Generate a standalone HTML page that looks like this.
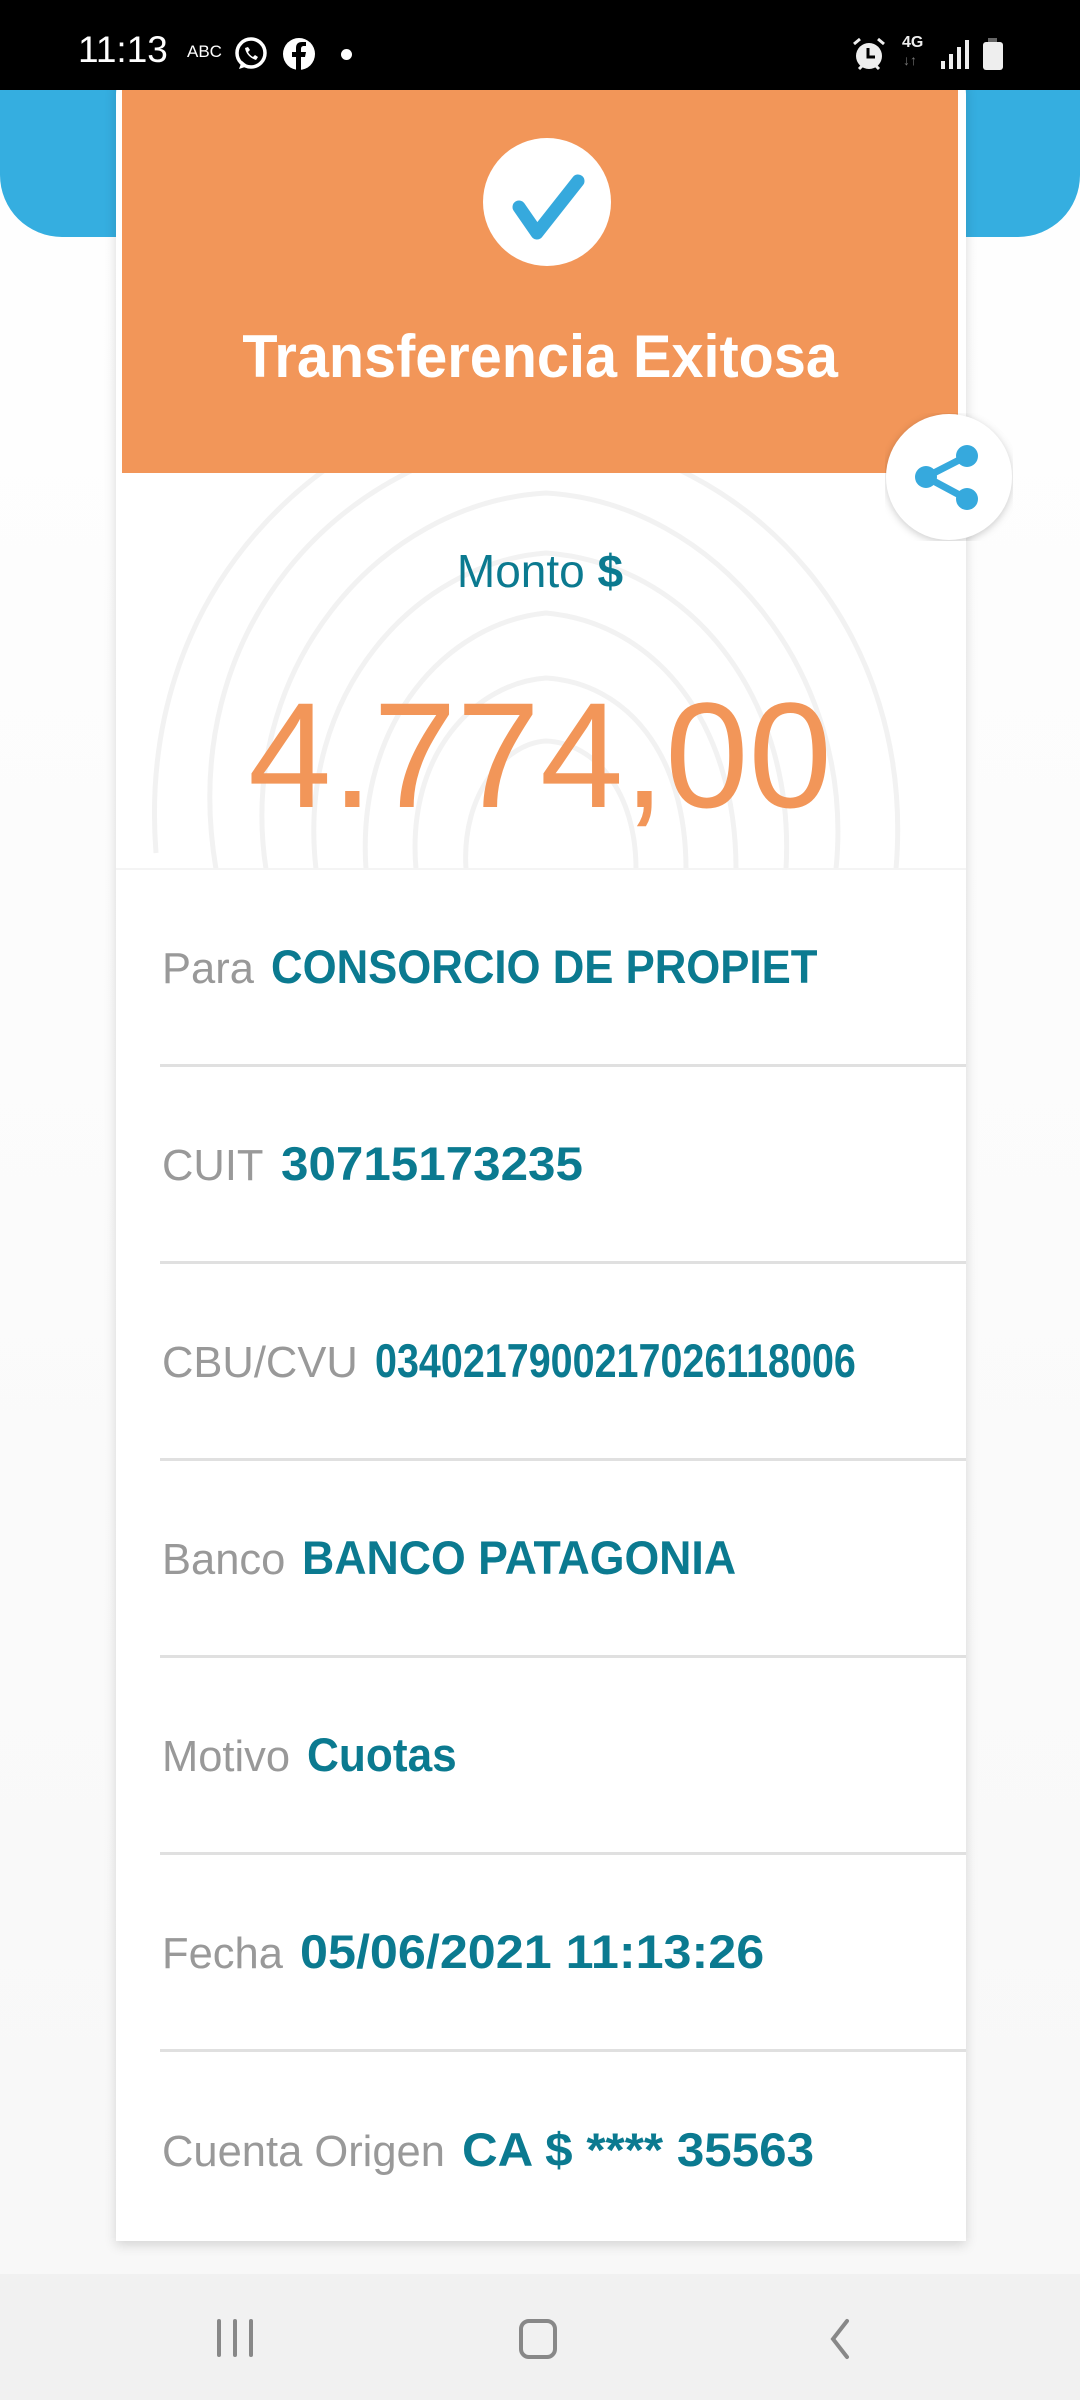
<!DOCTYPE html>
<html><head><meta charset="utf-8"><style>
*{margin:0;padding:0;box-sizing:border-box}
body{width:1080px;height:2400px;position:relative;overflow:hidden;background:linear-gradient(#ffffff 0,#f8f8f8 2200px);font-family:"Liberation Sans",sans-serif}
.abs{position:absolute}
.sb{left:0;top:0;width:1080px;height:90px;background:#000;color:#fff}
.blue{left:0;top:60px;width:1080px;height:177px;background:#35aee0;border-radius:0 0 62px 62px}
.card{left:116px;top:60px;width:850px;height:2181px;background:#fff;border-radius:34px 34px 0 0;box-shadow:0 4px 12px rgba(0,0,0,0.15)}
.orange{left:122px;top:60px;width:836px;height:413px;background:#f29659;border-radius:28px 28px 0 0}
.title{left:0;width:1080px;top:322px;text-align:center;color:#fff;font-weight:bold;font-size:60px;line-height:70px}
.title span{display:inline-block;transform:scaleX(0.96)}
.lbl{left:162px;font-size:43.5px;color:#999;line-height:50px;white-space:nowrap}
.lbl b{display:inline-block;color:#0b7a90;font-size:47px;transform-origin:left;margin-left:17px;vertical-align:baseline}
.div{left:160px;width:806px;height:3px;background:#e0e0e0}
.nav{left:0;top:2274px;width:1080px;height:126px;background:#f1f1f1}
</style></head><body>
<div class="abs blue"></div>
<div class="abs card"></div>
<div class="abs orange"></div>
<div class="abs sb">
 <div class="abs" style="left:78px;top:30px;font-size:37px;line-height:40px">11:13</div>
 <div class="abs" style="left:187px;top:42px;font-size:17px">ABC</div>
 <svg class="abs" style="left:233px;top:36px" width="36" height="36" viewBox="0 0 36 36"><circle cx="18" cy="17" r="14" fill="none" stroke="#fff" stroke-width="3.5"/><path d="M6 33l3-8 6 5z" fill="#fff"/><path d="M12 12c1 6 5 10 11 12l2-3-3-2-2 2c-2-1-4-3-5-5l2-2-2-3z" fill="#fff"/></svg>
 <svg class="abs" style="left:282px;top:37px" width="34" height="34" viewBox="0 0 34 34"><circle cx="17" cy="17" r="16" fill="#fff"/><path d="M19 34V20h4l1-5h-5v-3c0-2 1-3 3-3h2V5h-4c-4 0-6 2-6 6v4h-4v5h4v14z" fill="#000"/></svg>
 <div class="abs" style="left:341px;top:49px;width:11px;height:11px;border-radius:50%;background:#fff"></div>
 <svg class="abs" style="left:850px;top:36px" width="38" height="36" viewBox="0 0 38 36"><circle cx="19" cy="20" r="13" fill="#eee"/><path d="M18 12v9h7" stroke="#000" stroke-width="3" fill="none"/><path d="M4 8l6-5M34 8l-6-5M9 33l3-3M29 33l-3-3" stroke="#eee" stroke-width="3"/></svg>
 <div class="abs" style="left:902px;top:34px;font-size:16px;font-weight:bold;color:#eee">4G</div>
 <div class="abs" style="left:903px;top:52px;font-size:14px;color:#777">↓↑</div>
 <div class="abs" style="left:941px;top:61px;width:4px;height:8px;background:#eee"></div>
 <div class="abs" style="left:949px;top:54px;width:4px;height:15px;background:#eee"></div>
 <div class="abs" style="left:957px;top:47px;width:4px;height:22px;background:#eee"></div>
 <div class="abs" style="left:965px;top:40px;width:4px;height:29px;background:#eee"></div>
 <div class="abs" style="left:988px;top:38px;width:9px;height:4px;background:#666"></div>
 <div class="abs" style="left:983px;top:42px;width:20px;height:28px;background:#eee;border-radius:3px"></div>
</div>
<div class="abs" style="left:483px;top:138px;width:128px;height:128px;border-radius:50%;background:#fff"></div>
<svg class="abs" style="left:483px;top:138px" width="128" height="128" viewBox="483 138 128 128"><path d="M519 207L537 233L578 181" fill="none" stroke="#36a9dd" stroke-width="13" stroke-linecap="round" stroke-linejoin="round"/></svg>
<div class="abs title"><span>Transferencia Exitosa</span></div>
<svg class="abs" style="left:116px;top:473px" width="850" height="396" viewBox="0 0 850 396">
 <g fill="none" stroke="#f2f2f2" stroke-width="5">
  <path d="M150 396C120 200 260 30 430 20C600 30 740 200 720 396"/>
  <path d="M200 396C180 220 300 90 430 80C570 90 680 220 670 396"/>
  <path d="M250 396C240 250 330 150 430 140C540 150 620 250 620 396"/>
  <path d="M300 396C290 280 360 210 430 205C510 210 570 280 570 396"/>
  <path d="M350 396C345 320 390 270 430 268C480 270 520 320 520 396"/>
  <path d="M100 396C60 160 220 -20 430 -40C640 -20 800 160 780 396"/>
  <path d="M40 380C20 120 200 -60 430 -90"/>
 </g>
</svg>
<svg class="abs" style="left:885px;top:413px" width="128" height="128" viewBox="0 0 128 128"><circle cx="64" cy="64" r="63" fill="#fff" style="filter:drop-shadow(0 2px 4px rgba(0,0,0,.2))"/><path d="M41 64L82 43M41 64L82 86" stroke="#36a9dd" stroke-width="7"/><circle cx="41" cy="64" r="11" fill="#36a9dd"/><circle cx="82" cy="43" r="11" fill="#36a9dd"/><circle cx="82" cy="86" r="11" fill="#36a9dd"/></svg>
<div class="abs" style="left:0;width:1080px;top:545px;text-align:center;font-size:46px;color:#0b7a90;line-height:52px">Monto <b>$</b></div>
<div class="abs" style="left:0;width:1080px;top:675px;text-align:center;font-size:150px;color:#f29659;line-height:160px">4.774,00</div>
<div class="abs" style="left:116px;top:868px;width:850px;height:2px;background:#f4f4f4"></div>
<div class="abs lbl" style="top:942px">Para<b style="transform:scaleX(0.93)">CONSORCIO DE PROPIET</b></div>
<div class="abs div" style="top:1064px"></div>
<div class="abs lbl" style="top:1139px">CUIT<b style="transform:scaleX(1.05)">30715173235</b></div>
<div class="abs div" style="top:1261px"></div>
<div class="abs lbl" style="top:1336px">CBU/CVU<b style="transform:scaleX(0.84)">0340217900217026118006</b></div>
<div class="abs div" style="top:1458px"></div>
<div class="abs lbl" style="top:1533px">Banco<b style="transform:scaleX(0.95)">BANCO PATAGONIA</b></div>
<div class="abs div" style="top:1655px"></div>
<div class="abs lbl" style="top:1730px">Motivo<b style="transform:scaleX(0.94)">Cuotas</b></div>
<div class="abs div" style="top:1852px"></div>
<div class="abs lbl" style="top:1927px">Fecha<b style="transform:scaleX(1.07)">05/06/2021 11:13:26</b></div>
<div class="abs div" style="top:2049px"></div>
<div class="abs lbl" style="top:2125px">Cuenta Origen<b style="transform:scaleX(1.05)">CA $ **** 35563</b></div>
<div class="abs nav">
 <div class="abs" style="left:217px;top:45px;width:4px;height:38px;background:#888;border-radius:2px"></div>
 <div class="abs" style="left:233px;top:45px;width:4px;height:38px;background:#888;border-radius:2px"></div>
 <div class="abs" style="left:249px;top:45px;width:4px;height:38px;background:#888;border-radius:2px"></div>
 <div class="abs" style="left:519px;top:45px;width:38px;height:40px;border:4px solid #888;border-radius:10px"></div>
 <svg class="abs" style="left:826px;top:44px" width="26" height="42" viewBox="0 0 26 42"><path d="M21 3L7 21L21 39" fill="none" stroke="#888" stroke-width="4" stroke-linecap="round"/></svg>
</div>
</body></html>
